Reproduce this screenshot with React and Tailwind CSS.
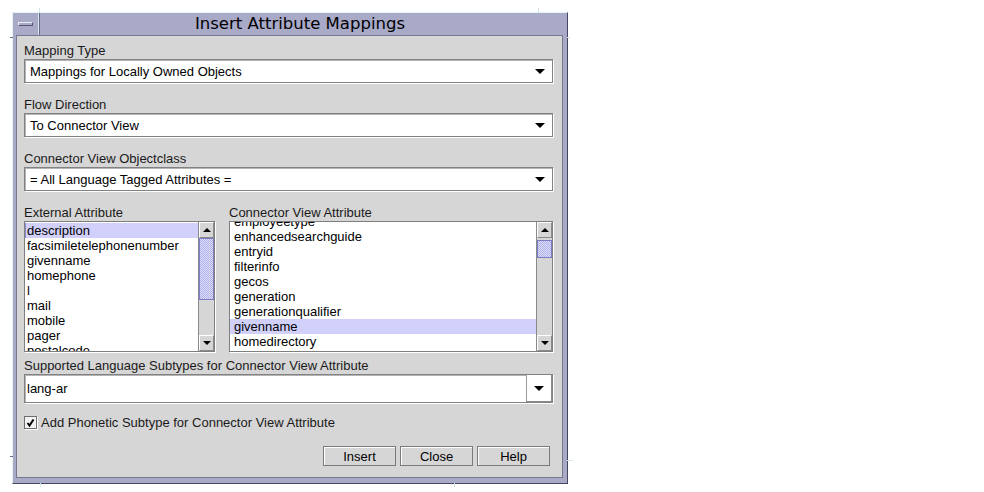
import React from 'react';

const leftItems = ['description', 'facsimiletelephonenumber', 'givenname', 'homephone', 'l', 'mail', 'mobile', 'pager', 'postalcode'];
const rightItems = ['employeetype', 'enhancedsearchguide', 'entryid', 'filterinfo', 'gecos', 'generation', 'generationqualifier', 'givenname', 'homedirectory'];

function Tri({ up = false, w = 9, h = 5 }) {
  return (
    <svg width={w} height={h} viewBox={`0 0 ${w} ${h}`} className="block">
      {up
        ? <polygon points={`0,${h} ${w},${h} ${w / 2},0`} fill="#000" />
        : <polygon points={`0,0 ${w},0 ${w / 2},${h}`} fill="#000" />}
    </svg>
  );
}

function Label({ children }) {
  return <div className="h-[14px] leading-[14px] text-[#1a1a1a] whitespace-nowrap">{children}</div>;
}

function Combo({ value }) {
  return (
    <div className="mt-[1px] h-[24px] flex items-center bg-white border border-[#828282] shadow-[inset_1px_1px_0_#b4b4b4,1px_1px_0_#ffffff]">
      <span className="flex-1 pl-[5px] leading-[15px] text-black">{value}</span>
      <span className="pr-[7px]"><Tri w={10} h={5} /></span>
    </div>
  );
}

function ArrowBtn({ up }) {
  return (
    <div className="h-[16px] flex items-center justify-center bg-[#d6d6d6] border-t border-l border-[#ffffff] border-b border-r border-b-[#8a8a8a] border-r-[#8a8a8a]">
      <Tri up={up} w={8} h={4} />
    </div>
  );
}

function ScrollBar({ thumbClass }) {
  return (
    <div className="w-[16px] flex flex-col bg-[#d6d6d6] border-l border-[#8a8a8a]">
      <ArrowBtn up />
      <div className="flex-1 flex flex-col">
        <div className={`border border-[#7c7cc4] bg-[repeating-conic-gradient(#b2b2e6_0%_25%,#dcdcfc_0%_50%)] bg-[length:2px_2px] ${thumbClass}`} />
      </div>
      <ArrowBtn />
    </div>
  );
}

function Btn({ children }) {
  return (
    <div className="w-[73px] h-[20px] flex items-center justify-center bg-[#d6d6d6] border border-[#7a7a7a] shadow-[inset_1px_1px_0_#ffffff] text-black leading-[15px]">
      {children}
    </div>
  );
}

export default function App() {
  return (
    <div className="min-h-screen bg-white pt-[12px] pl-[12px] text-[13px]" style={{ fontFamily: '"Liberation Sans", Arial, sans-serif' }}>
      <div className="relative w-[556px] h-[472px] flex flex-col bg-[#a9a9c8] border-t border-l border-[#e4f4f6] border-b border-r border-b-[#46465e] border-r-[#46465e] pl-[3px] pr-[4px] pb-[5px]">
        {/* frame corner notches */}
        <span className="absolute top-[-5px] left-[26px] w-px h-[5px] bg-[#cfe6ea]" />
        <span className="absolute top-[-5px] right-[28px] w-px h-[5px] bg-[#cfe6ea]" />
        <span className="absolute top-[24px] left-[-3px] w-[3px] h-px bg-[#6a6a8a]" />
        <span className="absolute top-[24px] right-[-3px] w-[3px] h-px bg-[#d8e8ea]" />
        <span className="absolute bottom-[26px] left-[-3px] w-[3px] h-px bg-[#6a6a8a]" />
        <span className="absolute bottom-[-4px] left-[27px] w-px h-[4px] bg-[#cfe6ea]" />
        <span className="absolute bottom-[22px] right-[-6px] w-[6px] h-px bg-[#d8e8ea]" />
        <span className="absolute bottom-[-4px] right-[112px] w-px h-[4px] bg-[#cfe6ea]" />

        {/* title bar */}
        <div className="h-[24px] flex items-stretch -ml-[3px] -mr-[4px]">
          <div className="w-[26px] flex items-center justify-center border-r border-[#d6e6ee] shadow-[1px_0_0_#6a6a8a]">
            <div className="w-[15px] h-[4px] bg-[#a9a9c8] border-t border-l border-[#e8f0f4] border-b border-r border-b-[#55556e] border-r-[#55556e]" />
          </div>
          <div className="flex-1 flex items-center justify-center text-[16.5px] text-black leading-[20px] pr-[6px]" style={{ fontFamily: '"DejaVu Sans", Verdana, sans-serif' }}>
            Insert Attribute Mappings
          </div>
        </div>

        {/* content */}
        <div className="flex-1 flex flex-col bg-[#d6d6d6] border border-[#77778e] pl-[7px] pr-[9px] pt-[8px] pb-[11px]">
          <div>
            <Label>Mapping Type</Label>
            <Combo value="Mappings for Locally Owned Objects" />
          </div>
          <div className="mt-[15px]">
            <Label>Flow Direction</Label>
            <Combo value="To Connector View" />
          </div>
          <div className="mt-[15px]">
            <Label>Connector View Objectclass</Label>
            <Combo value="= All Language Tagged Attributes =" />
          </div>

          <div className="mt-[15px] flex gap-[14px]">
            <div className="w-[191px] flex flex-col">
              <Label>External Attribute</Label>
              <div className="mt-[1px] h-[131px] flex bg-white border border-[#7f7f7f] shadow-[1px_1px_0_#ffffff]">
                <div className="flex-1 overflow-hidden pt-px">
                  {leftItems.map((it, i) => (
                    <div key={it} className={`h-[15px] leading-[15px] pl-[2px] text-black whitespace-nowrap ${i === 0 ? 'bg-[#d0d0fa] shadow-[inset_1px_0_0_#8c8cc8]' : ''}`}>{it}</div>
                  ))}
                </div>
                <ScrollBar thumbClass="h-[62px]" />
              </div>
            </div>
            <div className="flex-1 flex flex-col">
              <Label>Connector View Attribute</Label>
              <div className="mt-[1px] h-[131px] flex bg-white border border-[#7f7f7f] shadow-[1px_1px_0_#ffffff]">
                <div className="flex-1 overflow-hidden">
                  <div className="-mt-[8px]">
                    {rightItems.map((it, i) => (
                      <div key={it} className={`h-[15px] leading-[15px] pl-[4px] text-black whitespace-nowrap ${i === 7 ? 'bg-[#d0d0fa]' : ''}`}>{it}</div>
                    ))}
                  </div>
                </div>
                <ScrollBar thumbClass="mt-[2px] h-[18px]" />
              </div>
            </div>
          </div>

          <div className="mt-[7px]">
            <Label>Supported Language Subtypes for Connector View Attribute</Label>
            <div className="mt-[1px] h-[29px] flex bg-white border border-[#828282] shadow-[inset_1px_1px_0_#b4b4b4,1px_1px_0_#ffffff]">
              <span className="flex-1 self-center pl-[2px] leading-[15px] text-black">lang-ar</span>
              <div className="w-[26px] flex items-center justify-center bg-white border-l border-[#9a9a9a] border-b border-r border-b-[#8a8a8a] border-r-[#8a8a8a] shadow-[inset_1px_1px_0_#ffffff]">
                <Tri w={10} h={5} />
              </div>
            </div>
          </div>

          <div className="mt-[12px] flex items-center gap-[4px]">
            <div className="w-[13px] h-[13px] bg-[#f2f2f2] border border-[#6e6e6e] shadow-[1px_1px_0_#ffffff] flex items-center justify-center">
              <svg width="11" height="11" viewBox="0 0 11 11" className="block">
                <path d="M2.5 6 L4.5 8.5 L8.5 2.5" stroke="#000" strokeWidth="2" fill="none" />
              </svg>
            </div>
            <span className="leading-[15px] text-[#1a1a1a]">Add Phonetic Subtype for Connector View Attribute</span>
          </div>

          <div className="mt-[16px] flex justify-end gap-[4px] pr-[3px]">
            <Btn>Insert</Btn>
            <Btn>Close</Btn>
            <Btn>Help</Btn>
          </div>
        </div>
      </div>
    </div>
  );
}
